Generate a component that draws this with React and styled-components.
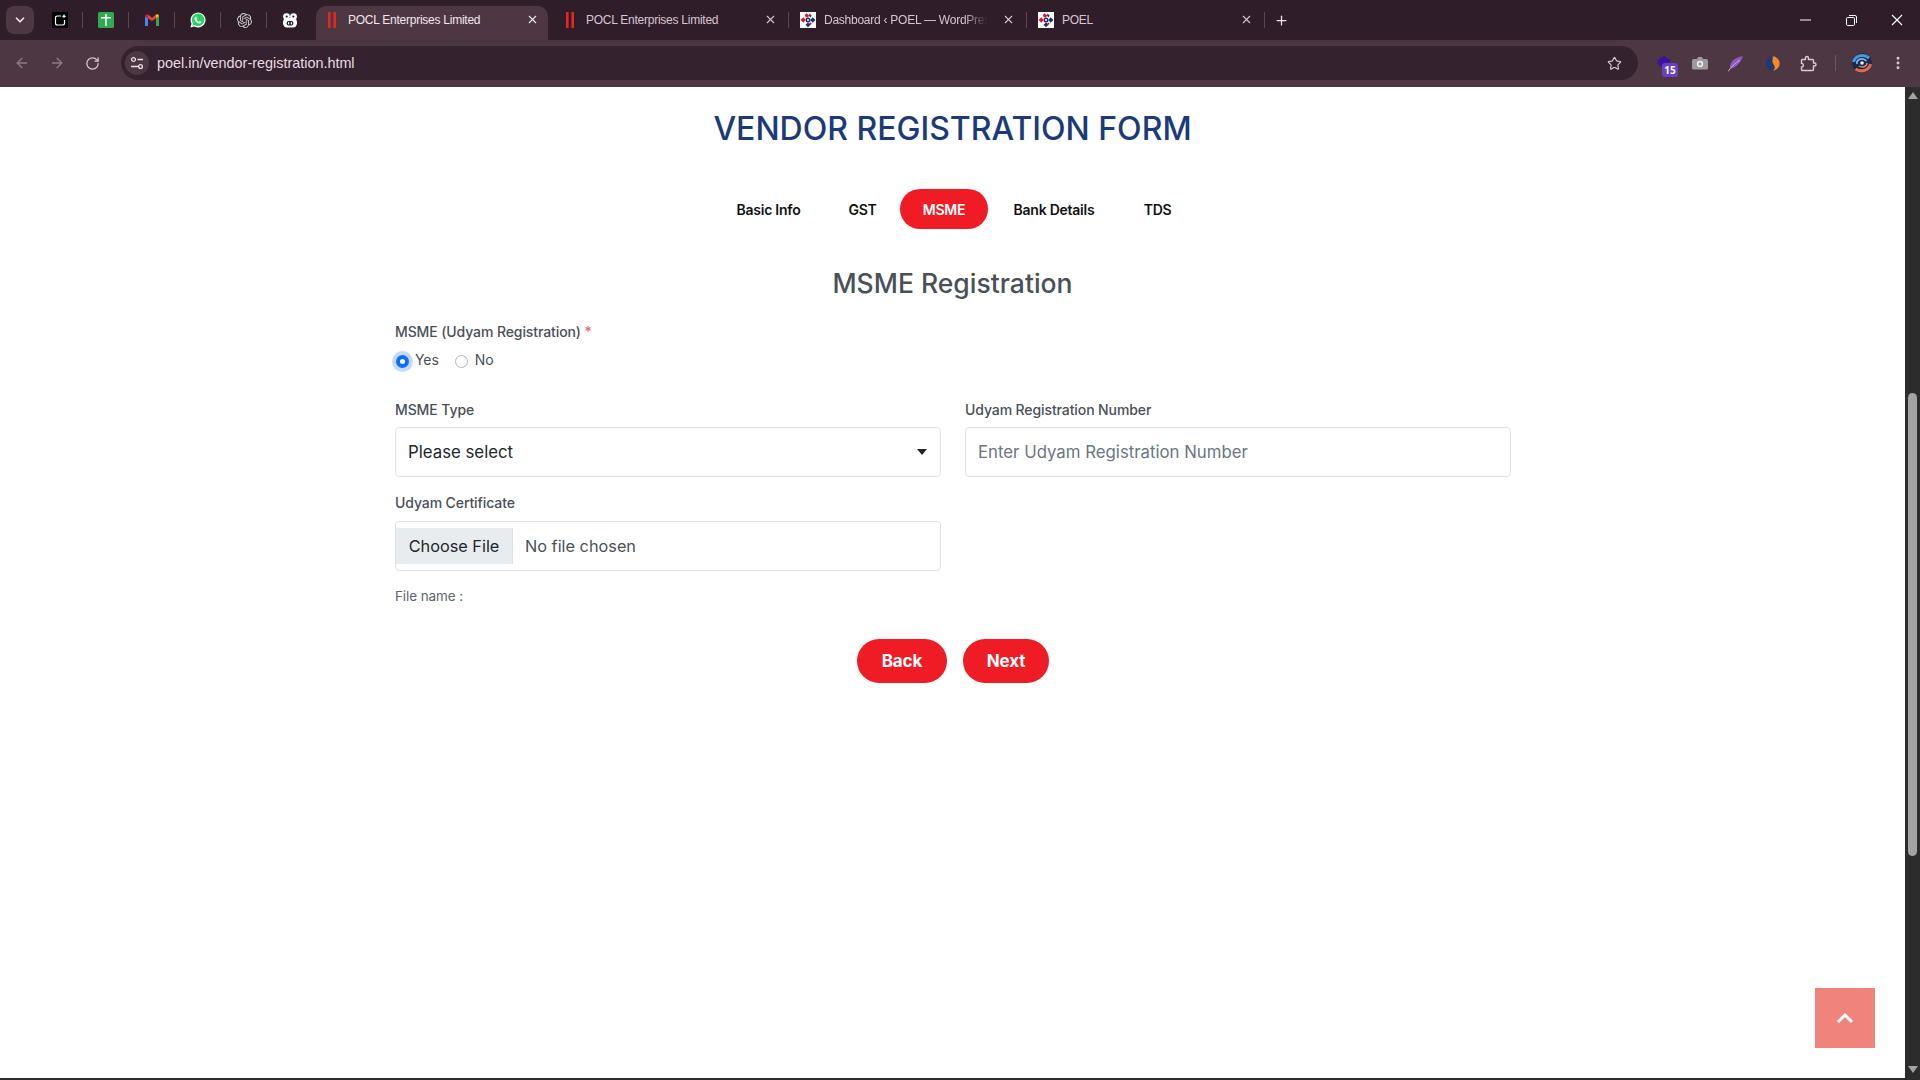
import React from "react";
import styled, { createGlobalStyle } from "styled-components";
import { ArrowLeft, ArrowRight, RotateCw, Star, EllipsisVertical, X, Plus, ChevronDown } from "lucide-react";
import { SiOpenai } from "react-icons/si";

const Global = createGlobalStyle`
  html, body { margin: 0; padding: 0; width: 1920px; height: 1080px; overflow: hidden; background: #fff; }
  * { box-sizing: border-box; }
  #root { width: 1920px; height: 1080px; }
`;

const Shell = styled.div`
  width: 1920px; height: 1080px; display: flex; flex-direction: column;
  font-family: "Inter", "Liberation Sans", sans-serif; background: #2c2c2c;
`;
const TabStrip = styled.div`
  height: 40px; flex: none; background: #2f1e2a; display: flex; align-items: flex-start; padding-left: 6px; position: relative;
`;
const TabSearch = styled.button`
  width: 28px; height: 28px; margin-top: 6px; margin-right: 3px; border: 0; padding: 0; border-radius: 8px; background: #4c3743; color: #f0e4ea;
  display: flex; align-items: center; justify-content: center;
`;
const Pinned = styled.div`
  width: 46px; height: 40px; display: flex; align-items: center; justify-content: center; position: relative;
  &::after { content: ""; display: ${p => (p.$last ? "none" : "block")}; position: absolute; right: 0; top: 12px; width: 1px; height: 16px; background: #5a4752; }
`;
const PinnedIcon = styled.span`
  width: 16px; height: 16px; display: flex; align-items: center; justify-content: center; color: ${p => p.$color || "#fff"};
`;
const Tabs = styled.div`
  display: flex; gap: 6px; margin-left: 3px; height: 40px; align-items: flex-end;
`;
const Tab = styled.div`
  width: 232px; height: 34px; display: flex; align-items: center; padding-left: 8px; position: relative; padding-bottom: 7px;
  border-radius: 10px 10px 0 0; background: ${p => (p.$active ? "#4c3743" : "transparent")};
  color: ${p => (p.$active ? "#f3e6ec" : "#d8c6cf")}; font: 400 12px "Liberation Sans", sans-serif; letter-spacing: -0.25px;
  &::after { content: ""; display: ${p => (p.$sep ? "block" : "none")}; position: absolute; right: -3px; top: 6px; width: 1px; height: 16px; background: #5a4752; }
`;
const Favicon = styled.span`
  width: 16px; height: 16px; flex: none; display: flex; align-items: center; justify-content: center; margin-right: 8px;
`;
const TabTitle = styled.span`
  width: 164px; white-space: nowrap; overflow: hidden; line-height: 16px;
  -webkit-mask-image: ${p => (p.$fade ? "linear-gradient(90deg,#000 85%,transparent)" : "none")};
`;
const TabClose = styled.span`
  position: absolute; left: 208px; top: 5px; width: 16px; height: 16px; display: flex; align-items: center; justify-content: center; color: ${p => (p.$active ? "#f3e6ec" : "#d8c6cf")};
`;
const NewTab = styled.span`
  margin-left: 12px; height: 40px; display: flex; align-items: center; color: #f0e4ea;
`;
const WindowControls = styled.div`
  margin-left: auto; display: flex; height: 40px; color: #fff;
`;
const WindowButton = styled.span`
  width: 46px; height: 40px; display: flex; align-items: center; justify-content: center;
`;
const Toolbar = styled.div`
  height: 47px; flex: none; background: #4c3743; display: flex; align-items: center; padding-left: 4px; padding-bottom: 1px;
`;
const NavButton = styled.span`
  width: 35.5px; height: 34px; display: flex; align-items: center; justify-content: center; color: ${p => (p.$dim ? "#8d7c86" : "#d9c8d1")};
`;
const Omnibox = styled.div`
  width: 1517px; height: 34px; margin-left: 10.5px; border-radius: 17px; background: #34222e; display: flex; align-items: center; padding-left: 4px; position: relative;
`;
const SiteChip = styled.span`
  width: 24px; height: 24px; border-radius: 50%; background: #4c3743; display: flex; align-items: center; justify-content: center; margin-right: 8px;
`;
const Url = styled.span`
  font: 400 14.4px "Liberation Sans", sans-serif; color: #e9dbe2;
`;
const BookmarkStar = styled.span`
  margin-left: auto; margin-right: 16px; display: flex; color: #dccbd4;
`;
const ExtTray = styled.div`
  display: flex; align-items: center; flex: 1; padding-left: 8px;
`;
const Ext = styled.span`
  width: 36px; height: 34px; display: flex; align-items: center; justify-content: center; position: relative; flex: none; color: #dccbd4;
`;
const ExtBadge = styled.span`
  position: absolute; left: 16px; top: 17px; width: 16px; height: 14px; border-radius: 3px; background: #6a3fc4; color: #fff;
  font: 700 10px/14px "Noto Sans", sans-serif; text-align: center;
`;
const ToolSep = styled.span`
  width: 1px; height: 16px; background: #6a5762; flex: none; margin: 0 8px 0 9px;
`;
const Body = styled.div`
  flex: 1; display: flex; min-height: 0; margin-bottom: 2px; position: relative;
`;
const Page = styled.main`
  width: 1905px; height: 100%; background: #fff; display: flex; flex-direction: column; align-items: center; padding-top: 23px;
`;
const Title = styled.h1`
  margin: 0; font: 500 32px/38px "Inter", sans-serif; color: #1b3a77; text-transform: uppercase; white-space: nowrap;
`;
const Steps = styled.nav`
  display: flex; margin: 41px 0 0 2px;
`;
const Step = styled.span`
  height: 40px; width: ${p => p.$w}px; border-radius: 20px; display: flex; align-items: center; justify-content: center;
  font: 600 14px "Inter", sans-serif; letter-spacing: -0.25px; color: ${p => (p.$active ? "#fff" : "#111")}; background: ${p => (p.$active ? "#ef1c25" : "transparent")};
`;
const SectionTitle = styled.h2`
  margin: 33px 0 0; font: 500 26.5px/42px "Inter", sans-serif; color: #495057;
`;
const Form = styled.form`
  width: 1116px; margin: 17px 0 0 1px; display: flex; flex-direction: column;
`;
const Label = styled.label`
  display: block; font: 500 14px/21px "Inter", sans-serif; color: #495057; letter-spacing: -0.1px;
`;
const Required = styled.span`
  color: #f4626a;
`;
const RadioRow = styled.div`
  display: flex; align-items: center; margin-top: 8px; height: 21px; padding-left: 1px; color: #495057; font: 400 14px/21px "Inter", sans-serif;
`;
const RadioDot = styled.span`
  width: 13px; height: 13px; border-radius: 50%; flex: none; margin-top: 2px; margin-right: ${p => (p.$on ? 6 : 7)}px;
  background: #fff;
  border: ${p => (p.$on ? "4px solid #0d6efd" : "1px solid #adb5bd")};
  box-shadow: ${p => (p.$on ? "0 0 0 4px rgba(13,110,253,.25)" : "none")};
`;
const RadioText = styled.span`
  margin-right: ${p => p.$gap || 0}px; margin-top: -3px; letter-spacing: -0.1px;
`;
const Grid = styled.div`
  display: grid; grid-template-columns: 546px 546px; column-gap: 24px; row-gap: 15px; margin-top: 28px;
`;
const Field = styled.div`
  display: flex; flex-direction: column; gap: ${p => p.$gap || 7}px;
`;
const BoxStyle = styled.div`
  height: 50px; border: 1px solid #dee2e6; border-radius: 4px; background: #fff; font: 400 16.8px "Inter", sans-serif; color: #212529; display: flex; align-items: center;
`;
const SelectBox = styled(BoxStyle)`
  padding: 0 13px 0 12px; justify-content: space-between;
`;
const TextInput = styled.input`
  height: 50px; width: 100%; border: 1px solid #dee2e6; border-radius: 4px; padding: 0 12px; outline: 0; font: 400 16.8px "Inter", sans-serif; color: #212529;
  &::placeholder { color: #6c757d; opacity: 1; }
`;
const FileBox = styled(BoxStyle)`
  color: #495057; font-size: 16.3px;
`;
const FileButton = styled.span`
  width: 117px; height: 36px; background: #e9ecef; border-right: 1px solid #dee2e6; color: #212529; display: flex; align-items: center; justify-content: center; margin-right: 12px;
`;
const FileName = styled.div`
  font: 400 13.5px/21px "Inter", sans-serif; color: #5c636a; margin-top: 15px; letter-spacing: -0.1px;
`;
const Actions = styled.div`
  display: flex; justify-content: center; gap: 16px; margin-top: 32px;
`;
const Pill = styled.button`
  height: 44px; width: ${p => p.$w}px; border: 0; padding: 0; border-radius: 22px; background: #ef1c25; color: #fff; font: 700 17px "Inter", sans-serif; letter-spacing: -0.1px;
`;
const ToTop = styled.a`
  position: absolute; left: 1815px; top: 901px; width: 60px; height: 60px; background: #f0837b; color: #fff; display: flex; align-items: center; justify-content: center;
`;
const Scrollbar = styled.div`
  width: 15px; height: 100%; background: #2c2c2c; position: relative; flex: none; display: flex; flex-direction: column; align-items: center; justify-content: space-between; padding: 5px 0 5px;
`;
const Arrow = styled.span`
  width: 0; height: 0; border-left: 5px solid transparent; border-right: 5px solid transparent;
  ${p => (p.$down ? "border-top: 7px solid #a3a3a3;" : "border-bottom: 7px solid #a3a3a3;")}
`;
const Thumb = styled.span`
  position: absolute; left: 3px; top: 306px; width: 9px; height: 463px; border-radius: 5px; background: #a3a3a3;
`;

const PoelLogo = () => (
  <svg width="16" height="16" viewBox="0 0 16 16">
    <rect width="16" height="16" fill="#fff" />
    <path d="M6.500 1.200L9.200 3.400 8 5.300 5.800 5.200 4.800 3.200z" fill="#e3171f" />
    <path d="M9.500 1.400L11.600 3.600 10.400 5.400 9 3.800z" fill="#1d2f66" />
    <path d="M3.300 5.200L5.700 8 3.300 10.800.6 8z" fill="#e3171f" />
    <path d="M12.700 5.200L15.400 8 12.700 10.800 10.300 8z" fill="#1d2f66" />
    <path d="M8 10.600l2.500 2.200L8 15.200l-2.500-2.400z" fill="#1d2f66" />
    <circle cx="8" cy="8" r="2.500" fill="#1d2f66" />
    <circle cx="8" cy="8" r="1" fill="#fff" />
    <path d="M10.300 10.300l1.500 1.500-1.200 1.200-1.500-1.500z" fill="#e3171f" />
  </svg>
);
const PoclLogo = () => (
  <svg width="16" height="16" viewBox="0 0 16 16">
    <rect x="4" y="0" width="2.600" height="16" rx=".5" fill="#e4281f" />
    <rect x="9.400" y="0" width="2.600" height="16" rx=".5" fill="#e4281f" />
  </svg>
);
const StickyNew = () => (
  <svg width="16" height="16" viewBox="0 0 16 16">
    <rect width="16" height="16" fill="#000" />
    <path d="M9 4H5.200A1.700 1.700 0 0 0 3.500 5.700v5.600A1.700 1.700 0 0 0 5.200 13h5.600a1.700 1.700 0 0 0 1.700-1.700V8" fill="none" stroke="#fff" strokeWidth="1.200" />
    <path d="M12 2l.7 1.600 1.600.7-1.600.7L12 6.600l-.7-1.600-1.600-.7 1.600-.7z" fill="#fff" />
  </svg>
);
const Sheets = () => (
  <svg width="16" height="16" viewBox="0 0 16 16">
    <rect width="16" height="16" rx="1.500" fill="#33a852" />
    <path d="M3 5.700h10M8 2v12" stroke="#fff" strokeWidth="1.500" />
  </svg>
);
const Gmail = () => (
  <svg width="16" height="14" viewBox="0 0 16 14">
    <path d="M1 13V3l3 2.300V13z" fill="#4285f4" />
    <path d="M12 13V5.300L15 3v10z" fill="#34a853" />
    <path d="M4 1.600L8 4.700l4-3.100v3.700L8 8 4 5.300z" fill="#ea4335" />
    <path d="M12 5.300L15 3.200C15 1.400 13.200.6 12 1.600z" fill="#fbbc04" />
    <path d="M1 3.200L4 5.300V1.600C2.800.6 1 1.400 1 3.200z" fill="#c5221f" />
  </svg>
);
const Whatsapp = () => (
  <svg width="16" height="16" viewBox="0 0 16 16">
    <path d="M.4 15.600l1.100-3.900A7.500 7.500 0 1 1 4.400 14.600z" fill="#fff" />
    <path d="M2.300 13.700l.7-2.400A6.200 6.200 0 1 1 4.800 13z" fill="#25d366" />
    <path d="M6 4.600c-.3 0-.7.100-1 .5-.5.600-.7 1.300-.5 2.100.4 1.600 2.300 3.700 4.300 4.200.9.200 1.700 0 2.200-.6.300-.3.400-.8.300-1.100l-1.600-.8-.8.900c-1-.4-1.900-1.200-2.400-2.300l.7-.8-.7-1.900z" fill="#fff" />
  </svg>
);
const PigFace = () => (
  <svg width="16" height="15" viewBox="0 0 16 15">
    <circle cx="4.500" cy="3.600" r="3.400" fill="#fff" />
    <circle cx="11.500" cy="3.600" r="3.400" fill="#fff" />
    <rect x="1" y="5" width="14" height="9.500" rx="4.200" fill="#fff" />
    <rect x="3.600" y="2.400" width="2.200" height="2" rx="1" fill="#2f1e2a" />
    <rect x="10.200" y="2.400" width="2.200" height="2" rx="1" fill="#2f1e2a" />
    <rect x="4.600" y="8" width="6.800" height="4.500" rx="2" fill="#2f1e2a" />
    <rect x="6" y="9" width="1.200" height="2.400" rx=".6" fill="#fff" />
    <rect x="8.800" y="9" width="1.200" height="2.400" rx=".6" fill="#fff" />
  </svg>
);
const SliderIcon = () => (
  <svg width="16" height="16" viewBox="0 0 16 16" fill="none" stroke="#ecdfe6" strokeWidth="1.300">
    <circle cx="4.500" cy="4.500" r="1.900" />
    <path d="M8.500 4.500H14M2 11.500h7.500" />
    <circle cx="11.500" cy="11.500" r="1.900" />
  </svg>
);
const RestoreIcon = () => (
  <svg width="11" height="11" viewBox="0 0 11 11" fill="none" stroke="#fff" strokeWidth="1">
    <rect x=".5" y="2.500" width="8" height="8" rx="1.200" />
    <path d="M3 .5h6a1.500 1.500 0 0 1 1.500 1.500v6" />
  </svg>
);
const CloseWin = () => (
  <svg width="12" height="12" viewBox="0 0 12 12" stroke="#fff" strokeWidth="1.100"><path d="M1 1l10 10M11 1L1 11" /></svg>
);
const MinWin = () => (
  <svg width="11" height="2" viewBox="0 0 11 2" stroke="#fff" strokeWidth="1"><path d="M0 1h11" /></svg>
);
const StackExt = () => (
  <svg width="16" height="16" viewBox="0 0 18 18">
    <path d="M9 1l8 5.500-8 5.500-8-5.500z" fill="#3d0fa3" />
    <path d="M1 9.500l2-1.300 6 4 6-4 2 1.300-8 5.500z" fill="#3d0fa3" />
  </svg>
);
const CameraExt = () => (
  <svg width="16" height="14" viewBox="0 0 16 14">
    <path d="M1.500 3H5l1-2h4l1 2h3.500A1.500 1.500 0 0 1 16 4.500v7.500a1.500 1.500 0 0 1-1.500 1.500h-13A1.500 1.500 0 0 1 0 12V4.500A1.500 1.500 0 0 1 1.500 3z" fill="#9e9a9c" />
    <circle cx="8" cy="8" r="2.400" fill="none" stroke="#f2f0f1" strokeWidth="1.500" />
  </svg>
);
const FeatherExt = () => (
  <svg width="16" height="17" viewBox="0 0 16 17">
    <path d="M15 1C9 2 3 5 2 11c0 1 0 2 .5 3C6 13 12 10 15 1z" fill="#8c5bc0" />
    <path d="M0 16.500C3 12 7 8 12 5" stroke="#c9a7e6" strokeWidth="1" fill="none" />
  </svg>
);
const SimilarExt = () => (
  <svg width="15" height="15" viewBox="0 0 15 15">
    <circle cx="7.500" cy="7.500" r="7.200" fill="#1f3a6e" />
    <path d="M7.500.3a7.200 7.200 0 0 1 0 14.400c2-1 2.800-3 1.800-5-1-1.900-2.400-3.300-1.800-5.600C7.800 2.700 8 1.500 7.500.3z" fill="#f58a1f" />
  </svg>
);
const PuzzleExt = () => (
  <svg width="17" height="17" viewBox="0 0 17 17" fill="none" stroke="currentColor" strokeWidth="1.400" strokeLinejoin="round">
    <path d="M2.500 4.500h3V3a1.500 1.500 0 0 1 3 0v1.500h4a1 1 0 0 1 1 1V8h1a1.500 1.500 0 0 1 0 3h-1v3.500a1 1 0 0 1-1 1h-10a1 1 0 0 1-1-1V12a1.800 1.800 0 0 0 0-3.600V5.500a1 1 0 0 1 1-1z" />
  </svg>
);
const ProfileExt = () => (
  <svg width="20" height="20" viewBox="0 0 20 20" fill="none">
    <circle cx="10" cy="10" r="10" fill="#1a2a4a" />
    <path d="M1.500 9C3 3 11 0 17 5" stroke="#4d97e0" strokeWidth="3" />
    <path d="M18.500 11c-1 6-9 9-15 5" stroke="#e5694a" strokeWidth="3" />
    <path d="M5 11C4 6 11 4 14.500 8" stroke="#7cb6ec" strokeWidth="1.800" />
    <path d="M15 10c0 4-5 5-8 3" stroke="#e58a6a" strokeWidth="1.400" />
    <circle cx="10" cy="10" r="1.800" fill="#eeeef4" />
  </svg>
);

const TABS = [
  { title: "POCL Enterprises Limited", icon: <PoclLogo />, active: true },
  { title: "POCL Enterprises Limited", icon: <PoclLogo />, sep: true },
  { title: "Dashboard ‹ POEL — WordPress", icon: <PoelLogo />, sep: true, fade: true },
  { title: "POEL", icon: <PoelLogo />, sep: true },
];

const PINNED = [
  <StickyNew />, <Sheets />, <Gmail />, <Whatsapp />,
  <SiOpenai size={15} color="#cfcfcf" />, <PigFace />,
];

const STEPS = [
  { label: "Basic Info", w: 113 },
  { label: "GST", w: 75 },
  { label: "MSME", w: 88, active: true },
  { label: "Bank Details", w: 132 },
  { label: "TDS", w: 75 },
];

export default function App() {
  return (
    <Shell>
      <Global />
      <TabStrip>
        <TabSearch type="button"><ChevronDown size={14} strokeWidth={3} /></TabSearch>
        {PINNED.map((icon, i) => (
          <Pinned key={i} $last={i === PINNED.length - 1}><PinnedIcon>{icon}</PinnedIcon></Pinned>
        ))}
        <Tabs>
          {TABS.map((t, i) => (
            <Tab key={i} $active={t.active} $sep={t.sep}>
              <Favicon>{t.icon}</Favicon>
              <TabTitle $fade={t.fade}>{t.title}</TabTitle>
              <TabClose $active={t.active}><X size={13} strokeWidth={2} /></TabClose>
            </Tab>
          ))}
        </Tabs>
        <NewTab><Plus size={15} strokeWidth={2} /></NewTab>
        <WindowControls>
          <WindowButton><MinWin /></WindowButton>
          <WindowButton><RestoreIcon /></WindowButton>
          <WindowButton><CloseWin /></WindowButton>
        </WindowControls>
      </TabStrip>
      <Toolbar>
        <NavButton $dim><ArrowLeft size={16} /></NavButton>
        <NavButton $dim><ArrowRight size={16} /></NavButton>
        <NavButton><RotateCw size={15} strokeWidth={2} /></NavButton>
        <Omnibox>
          <SiteChip><SliderIcon /></SiteChip>
          <Url>poel.in/vendor-registration.html</Url>
          <BookmarkStar><Star size={15} strokeWidth={1.800} /></BookmarkStar>
        </Omnibox>
        <ExtTray>
          <Ext><StackExt /><ExtBadge>15</ExtBadge></Ext>
          <Ext><CameraExt /></Ext>
          <Ext><FeatherExt /></Ext>
          <Ext><SimilarExt /></Ext>
          <Ext><PuzzleExt /></Ext>
          <ToolSep />
          <Ext><ProfileExt /></Ext>
          <Ext><EllipsisVertical size={16} strokeWidth={2.400} /></Ext>
        </ExtTray>
      </Toolbar>
      <Body>
        <Page>
          <Title>Vendor Registration Form</Title>
          <Steps>
            {STEPS.map(s => <Step key={s.label} $w={s.w} $active={s.active}>{s.label}</Step>)}
          </Steps>
          <SectionTitle>MSME Registration</SectionTitle>
          <Form>
            <Label>MSME (Udyam Registration) <Required>*</Required></Label>
            <RadioRow>
              <RadioDot $on />
              <RadioText $gap={16}>Yes</RadioText>
              <RadioDot />
              <RadioText>No</RadioText>
            </RadioRow>
            <Grid>
              <Field>
                <Label>MSME Type</Label>
                <SelectBox>
                  Please select
                  <svg width="10" height="6" viewBox="0 0 10 6"><path d="M0 0h10L5 6z" fill="#212529" /></svg>
                </SelectBox>
              </Field>
              <Field>
                <Label>Udyam Registration Number</Label>
                <TextInput placeholder="Enter Udyam Registration Number" readOnly />
              </Field>
              <Field $gap={8}>
                <Label>Udyam Certificate</Label>
                <FileBox><FileButton>Choose File</FileButton>No file chosen</FileBox>
              </Field>
            </Grid>
            <FileName>File name :</FileName>
            <Actions>
              <Pill type="button" $w={90}>Back</Pill>
              <Pill type="button" $w={86}>Next</Pill>
            </Actions>
          </Form>
        </Page>
        <Scrollbar>
          <Arrow />
          <Thumb />
          <Arrow $down />
        </Scrollbar>
        <ToTop>
          <svg width="18" height="12" viewBox="0 0 18 12" fill="none" stroke="#fff" strokeWidth="3"><path d="M2 10l7-7 7 7" /></svg>
        </ToTop>
      </Body>
    </Shell>
  );
}
